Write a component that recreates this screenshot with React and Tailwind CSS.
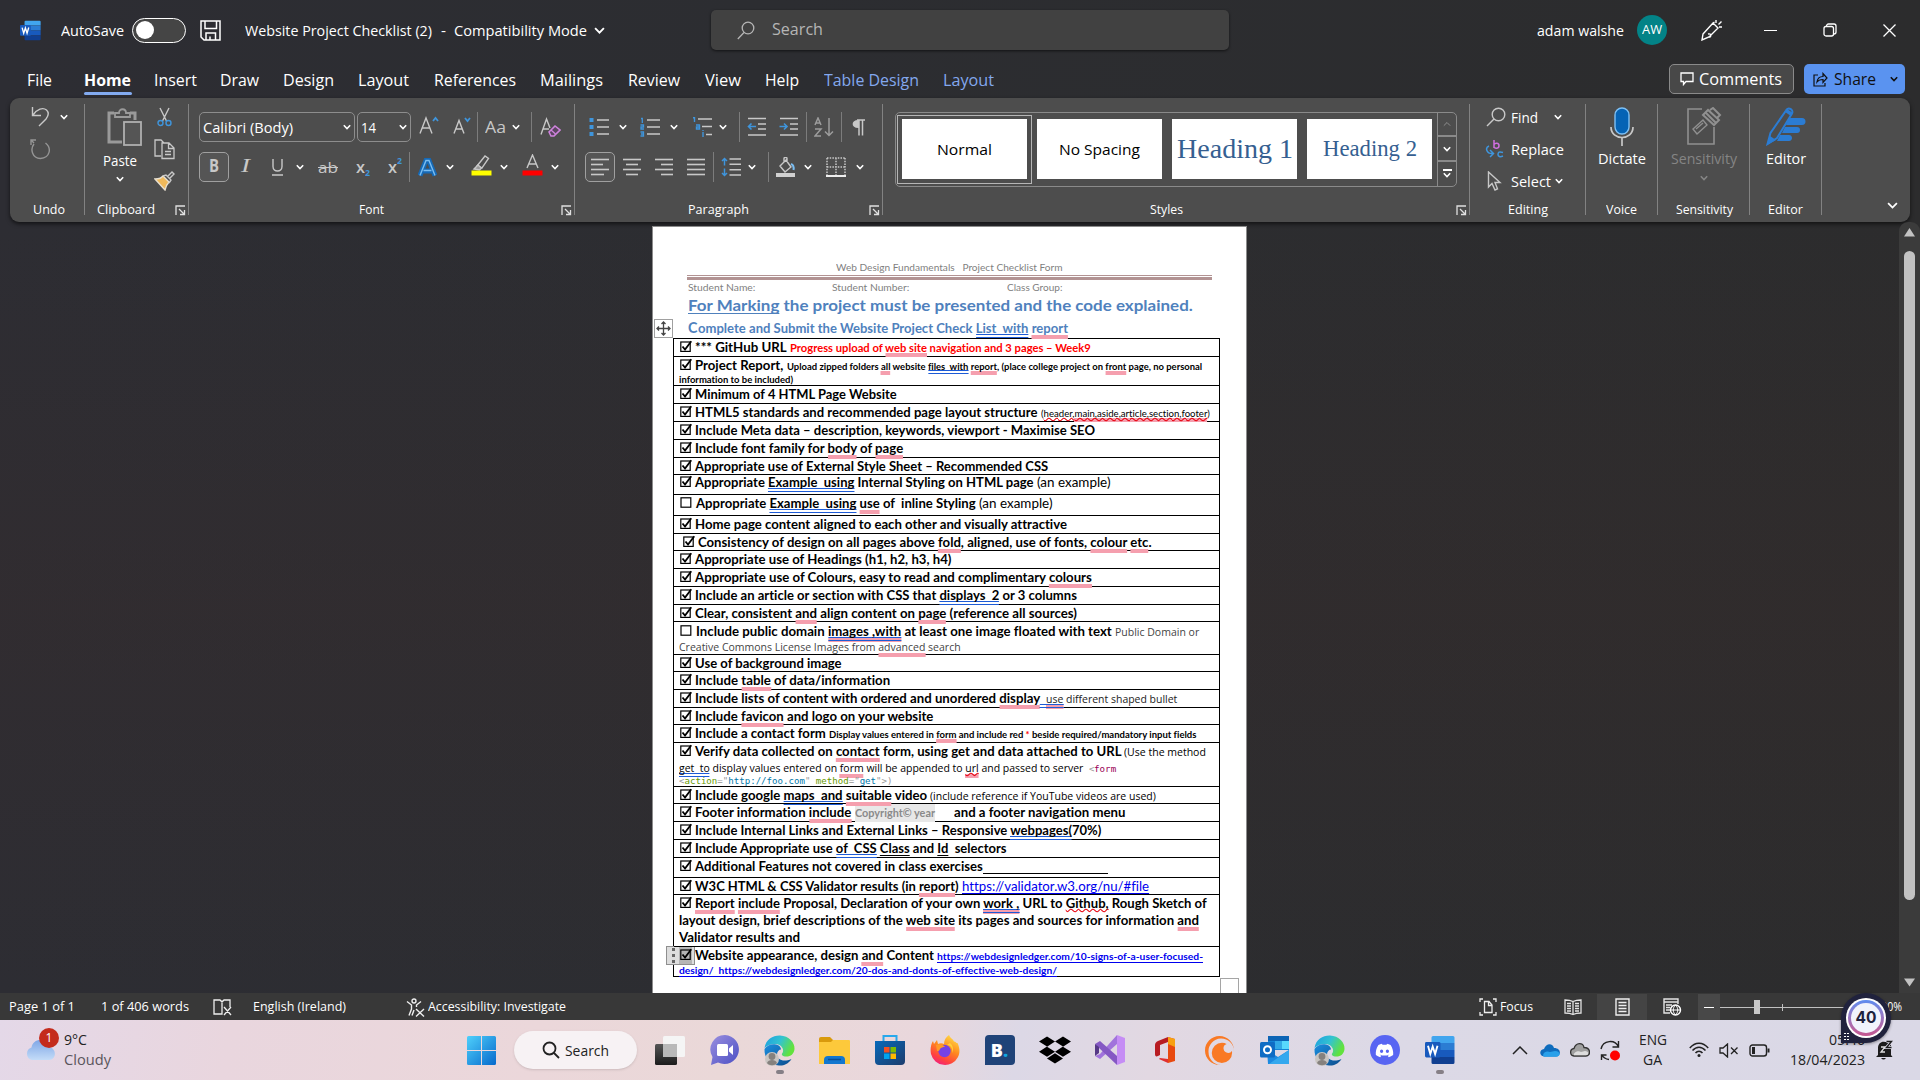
import React, { useLayoutEffect, useRef, useState } from "react";
import { FaDiscord, FaDropbox, FaFirefoxBrowser } from "react-icons/fa";
import { SiCrunchyroll } from "react-icons/si";

/* Text run set to an exact advance width: condenses or expands the glyphs. */
function Fit({ w, className = "", children }) {
  const ref = useRef(null);
  const [k, setK] = useState(1);
  useLayoutEffect(() => {
    const el = ref.current;
    const prev = el.style.transform;
    el.style.transform = "none";
    const natural = el.getBoundingClientRect().width;
    el.style.transform = prev;
    if (natural > 0) setK(w / natural);
  }, [w]);
  return (
    <span className={"inline-block shrink-0 whitespace-pre " + className} style={{ width: w }}>
      <span ref={ref} className="inline-block origin-left" style={{ transform: `scaleX(${k})` }}>
        {children}
      </span>
    </span>
  );
}

function Chev({ className = "", size = 8, sw = 1.6 }) {
  return (
    <svg className={"shrink-0 " + className} width={size} height={size} viewBox="0 0 8 8" fill="none" stroke="currentColor" strokeWidth={sw}>
      <path d="M0.8 2.3 4 5.5 7.2 2.3" />
    </svg>
  );
}

function Svg({ w, h, className = "", children, vb }) {
  return (
    <svg className={"shrink-0 " + className} width={w} height={h} viewBox={vb || `0 0 ${w} ${h}`} fill="none" stroke="#c8c8c8" strokeWidth="1.4">
      {children}
    </svg>
  );
}

function WordIcon({ size }) {
  return (
    <svg className="shrink-0" width={size} height={size} viewBox="0 0 30 30">
      <path d="M8 1h20a1.5 1.5 0 0 1 1.5 1.5V8H6.500V2.500A1.500 1.500 0 0 1 8 1z" fill="#41a5ee" />
      <path d="M6.500 8h23v7h-23z" fill="#2b7cd3" />
      <path d="M6.500 15h23v7h-23z" fill="#185abd" />
      <path d="M6.500 22h23v5.500A1.500 1.500 0 0 1 28 29H8a1.500 1.500 0 0 1-1.500-1.500z" fill="#103f91" />
      <rect x="0" y="7" width="15.500" height="15.500" rx="1.400" fill="#185abd" />
      <path d="M3 10.800 5.300 19 7.700 11.500 10.100 19 12.500 10.800" fill="none" stroke="#fff" strokeWidth="1.900" />
    </svg>
  );
}

/* ---------- Title bar ---------- */
function TitleBar() {
  return (
    <div className="flex h-[60px] items-center text-[14px] leading-5 text-white">
      <div className="ml-5 flex"><WordIcon size={21} /></div>
      <Fit w={63} className="ml-5 translate-y-px">AutoSave</Fit>
      <div className="ml-2 flex h-[25px] w-[54px] items-center rounded-full border-[1.500px] border-white bg-[#454545] pl-[3px]">
        <div className="size-[18px] rounded-full bg-white" />
      </div>
      <Svg w={21} h={21} className="ml-[14px]">
        <g stroke="#fff" strokeWidth="1.500">
          <path d="M1 1h19v19H4l-3-3z" /><path d="M5 1v7.500h11.500V1M6 20v-7h9.500v7M10 20v-3.500" />
        </g>
      </Svg>
      <Fit w={187} className="ml-6 translate-y-px">Website Project Checklist (2)</Fit>
      <Fit w={5} className="ml-[9px] translate-y-px">-</Fit>
      <Fit w={133} className="ml-2 translate-y-px">Compatibility Mode</Fit>
      <Chev className="ml-[7px]" size={11} sw={1.400} />
      <div className="ml-[106px] flex h-10 w-[518px] items-center rounded-[5px] bg-[#414141] text-[15.500px] text-[#b5b5b5] shadow-[0_1px_3px_rgba(0,0,0,.6)]">
        <Svg w={18} h={19} className="ml-[26px]"><circle cx="11" cy="7" r="5.800" stroke="#b5b5b5" strokeWidth="1.300" /><path d="M7 11.500.8 18" stroke="#b5b5b5" strokeWidth="1.300" /></Svg>
        <Fit w={51} className="ml-[17px] -mt-0.5">Search</Fit>
      </div>
      <Fit w={87} className="ml-[308px] translate-y-px">adam walshe</Fit>
      <div className="ml-[13px] flex size-[30px] items-center justify-center rounded-full bg-[#038387] text-[12px]"><Fit w={20}>AW</Fit></div>
      <Svg w={22} h={22} className="ml-[34px]">
        <g stroke="#fff" strokeWidth="1.400"><path d="M2 15 12 4l5 5-9 9-7 3zM12 4l1.500-1M8 18c2 0 3-4-1-3M15 4V1M17.500 5.500l3-3M18 8h3" /></g>
      </Svg>
      <div className="ml-[41px] h-px w-[13px] bg-white" />
      <Svg w={14} h={14} className="ml-[46px]"><g stroke="#fff" strokeWidth="1.300"><rect x="1" y="3.500" width="9.500" height="9.500" rx="2" /><path d="M3.500 3.500V3a2 2 0 0 1 2-2H11a2 2 0 0 1 2 2v6a2 2 0 0 1-2 2h-.5" /></g></Svg>
      <Svg w={13} h={13} className="ml-[46px]"><path d="M.5.5l12 12M12.500.5l-12 12" stroke="#fff" strokeWidth="1.300" /></Svg>
    </div>
  );
}

/* ---------- Ribbon tabs ---------- */
function Tabs() {
  return (
    <div className="flex h-[38px] items-start text-[16px] leading-5 text-white">
      <div className="flex w-full items-center pt-[10px]">
        <Fit w={25} className="ml-[27px]">File</Fit>
        <div className="relative ml-8"><Fit w={47} className="font-bold">Home</Fit><div className="absolute left-0 top-[22px] h-[3px] w-[48px] rounded-sm bg-[#82aaf0]" /></div>
        <Fit w={43} className="ml-[23px]">Insert</Fit>
        <Fit w={39} className="ml-[23px]">Draw</Fit>
        <Fit w={51} className="ml-6">Design</Fit>
        <Fit w={51} className="ml-6">Layout</Fit>
        <Fit w={82} className="ml-[25px]">References</Fit>
        <Fit w={63} className="ml-6">Mailings</Fit>
        <Fit w={52} className="ml-[25px]">Review</Fit>
        <Fit w={36} className="ml-[25px]">View</Fit>
        <Fit w={34} className="ml-6">Help</Fit>
        <Fit w={95} className="ml-[25px] text-[#83a8ee]">Table Design</Fit>
        <Fit w={51} className="ml-6 text-[#83a8ee]">Layout</Fit>
        <div className="-mb-2 -mt-[10px] ml-[675px] flex h-[30px] w-[125px] items-center rounded-[5px] border border-[#8a8a8a] bg-[#484848]">
          <Svg w={14} h={14} className="ml-[10px]"><path d="M1 1h12v8.500H6L3.500 12.500V9.500H1z" stroke="#fff" strokeWidth="1.300" /></Svg>
          <Fit w={83} className="ml-[5px]">Comments</Fit>
        </div>
        <div className="-mb-2 -mt-[10px] ml-[10px] flex h-[30px] w-[101px] items-center rounded-[5px] bg-[#5a93f0] text-[#101010]">
          <Svg w={15} h={15} className="ml-[9px]"><path d="M5 3H1v11h11v-3M4 10c.5-4 3-5.500 6-5.500V1.500l4 4.500-4 4.500V7.500C7 7.500 5.500 8 4 10z" stroke="#101010" strokeWidth="1.200" /></Svg>
          <Fit w={42} className="ml-[6px]">Share</Fit>
          <Chev className="ml-[14px]" />
        </div>
      </div>
    </div>
  );
}

/* ---------- Ribbon ---------- */
function Launcher({ className = "" }) {
  return <Svg w={11} h={11} className={className}><path d="M1 10V1h9M4 4l5.500 5.500M9.500 5v4.500H5" stroke="#e0e0e0" strokeWidth="1.300" /></Svg>;
}
function Sep({ className = "" }) {
  return <div className={"h-[30px] w-px shrink-0 bg-[#7c7c7c] " + className} />;
}
function Group({ className = "", label, lw, lml, launcher, children }) {
  return (
    <div className={"relative flex shrink-0 flex-col " + className}>
      <div className="h-[105px]">{children}</div>
      <div className="flex h-[14px] items-center text-[12px] leading-[14px] text-white">
        <Fit w={lw} className={lml}>{label}</Fit>
        {launcher && <Launcher className="ml-auto mr-[3px]" />}
      </div>
      <div className="absolute right-0 top-[6px] h-[111px] w-px bg-[#828282]" />
    </div>
  );
}
function Lines({ rows, w = 18, h = 18, className = "" }) {
  return (
    <Svg w={w} h={h} className={className}>
      {rows.map(([a, b], i) => <path key={i} d={`M${a} ${1.5 + i * 5}H${b}`} strokeWidth="1.600" />)}
    </Svg>
  );
}
function UndoGroup() {
  return (
    <Group className="w-[75px]" label="Undo" lw={32} lml="ml-[23px]">
      <div className="flex h-[38px] items-center">
        <Svg w={19} h={21} className="ml-[21px] -mt-0.5"><path d="M1.500 1v8.500H10M2 9C6 3 12 1 15.500 4c3 3 1.500 6.500-.5 9l-7 7" /></Svg>
        <Chev className="ml-[10px] text-white" />
      </div>
      <div className="flex h-[26px] items-center">
        <Svg w={21} h={21} className="ml-5"><path d="M6 1H1v5M1.500 1.500 4 4M4 5C0 10 2 19 10.500 19.500 20 19 22 9 15.500 4" stroke="#959595" /></Svg>
      </div>
    </Group>
  );
}
function ClipboardGroup() {
  return (
    <Group className="w-[104px]" label="Clipboard" lw={58} lml="ml-[12px]" launcher>
      <div className="flex">
        <div className="flex w-[69px] flex-col items-center pt-[10px] text-[14px] leading-[18px] text-white">
          <Svg w={36} h={39} className="ml-[10px]">
            <path d="M7 5H2v29h13M23 5h5v7" stroke="#9a9a9a" strokeWidth="3" />
            <path d="M8 9V5h4c0-5 7-5 7 0h4v4z" stroke="#9a9a9a" strokeWidth="1.800" />
            <rect x="17" y="14" width="17" height="23" stroke="#b0b0b0" strokeWidth="1.800" fill="#555" />
          </Svg>
          <Fit w={34} className="ml-px mt-[5px]">Paste</Fit>
          <Chev className="mt-[5px]" />
        </div>
        <div className="flex flex-col items-center pt-[9px]">
          <Svg w={15} h={20}><path d="M3 1l6.500 13M12 1 5.500 14" /><circle cx="3.500" cy="16" r="2.500" stroke="#3f95dc" /><circle cx="11.500" cy="16" r="2.500" stroke="#3f95dc" /></Svg>
          <Svg w={21} h={21} className="mt-3"><path d="M7 17H1V1h6l3 3M8 4h7l5 5v10.500H8zM14.500 4v5.500H20M11 12.500h6M11 15.500h6" strokeWidth="1.300" /></Svg>
          <Svg w={21} h={20} className="mt-[11px]"><path d="M1 8c5 0 6-1 8-3l6 6c-2 2-3 4-4 8z" fill="#f0b95a" stroke="#e8e0d0" /><path d="m9 5 3-1 5 5-2 3M13.500 5.500 18 1l2 2-4.500 4.500" /></Svg>
        </div>
      </div>
    </Group>
  );
}
function Big({ ch, w, className = "" }) {
  return <Fit w={w} className={"leading-[22px] " + className}>{ch}</Fit>;
}
function FontGroup() {
  return (
    <Group className="w-[386px]" label="Font" lw={25} lml="ml-[170px]" launcher>
      <div className="flex h-[30px] translate-y-[14px] items-center text-white">
        <div className="ml-[10px] flex h-[30px] w-[156px] items-center rounded-[5px] border border-[#8d8d8d] text-[14.500px]">
          <Fit w={90} className="ml-[3px] translate-y-px">Calibri (Body)</Fit><Chev className="ml-auto mr-[3px]" />
        </div>
        <div className="ml-[2px] flex h-[30px] w-[54px] items-center rounded-[5px] border border-[#8d8d8d] text-[14.500px]">
          <Fit w={15} className="ml-[3px] translate-y-px">14</Fit><Chev className="ml-auto mr-[3px]" />
        </div>
        <Svg w={20} h={19} className="ml-[8px] -mt-1"><path d="m1 17.500 6-15.500 6 15.500M3.200 12h7.600" /><path d="m14 5 2.500-3L19 5" stroke="#3f95dc" strokeWidth="1.800" /></Svg>
        <Svg w={18} h={19} className="ml-[14px] -mt-1"><path d="m1 17.500 5-13 5 13M2.800 13h6.400" /><path d="m12 2 2.500 3L17 2" stroke="#3f95dc" strokeWidth="1.800" /></Svg>
        <Sep className="ml-[6px]" />
        <Big ch="Aa" w={21} className="ml-[7px] text-[17px] text-[#c8c8c8]" />
        <Chev className="ml-[6px]" />
        <Sep className="ml-[11px]" />
        <Svg w={21} h={21} className="ml-[8px]"><path d="M1 17.500 6.500 2l3.500 9M3 12h6" /><path d="m9 15 6-6 5 4-6 6h-3z" fill="#5b4560" stroke="#cf83dd" strokeWidth="1.600" /><path d="m11 13 4.500 4" stroke="#cf83dd" /></Svg>
      </div>
      <div className="flex h-[30px] translate-y-[24px] items-center text-white">
        <div className="ml-[10px] flex h-[30px] w-[30px] items-center justify-center rounded-[5px] border border-[#a0a0a0] bg-[#555]"><Big ch="B" w={10} className="-translate-y-px text-[17px] font-bold text-[#c8c8c8]" /></div>
        <Big ch="I" w={9} className="ml-[12px] -translate-y-px font-['Liberation_Serif',serif] text-[19px] italic text-[#c8c8c8]" />
        <Svg w={13} h={18} className="ml-[21px]"><path d="M2 1v7.500c0 6 9 6 9 0V1M1 17h11" /></Svg>
        <Chev className="ml-[12px]" />
        <Big ch={<span className="line-through">ab</span>} w={20} className="ml-[14px] text-[15px] text-[#c8c8c8]" />
        <div className="ml-[18px] flex w-[14px] text-[#c8c8c8]"><Big ch="x" w={9} className="text-[16px] font-semibold" /><Big ch="2" w={5} className="translate-y-1.5 text-[9px] font-bold text-[#3f95dc]" /></div>
        <div className="ml-[18px] flex w-[14px] text-[#c8c8c8]"><Big ch="x" w={9} className="text-[16px] font-semibold" /><Big ch="2" w={5} className="-translate-y-1.5 text-[9px] font-bold text-[#3f95dc]" /></div>
        <Sep className="ml-[7px]" />
        <Svg w={19} h={19} className="ml-[8px]"><path d="m2 17.500 6-15h3l6 15M5 13h9" stroke="#1669b5" strokeWidth="5" /><path d="m2 17.500 6-15h3l6 15M5.500 12.500h8" stroke="#79bdf2" strokeWidth="1.400" /></Svg>
        <Chev className="ml-[9px]" />
        <Svg w={21} h={22} className="ml-[17px] -mt-1"><path d="m6 12 8-10 3.500 2.500L11 14z" /><path d="M3 15l4-4 3.500 3-2 2z" fill="#999" /><path d="M.5 16.500h20v5H.5z" fill="#ff0" stroke="none" /></Svg>
        <Chev className="ml-[8px]" />
        <Svg w={21} h={22} className="ml-[14px] -mt-1"><path d="m5 14 5.500-13L16 14M7 10h7" /><path d="M.5 16.500h20v5H.5z" fill="#f00" stroke="none" /></Svg>
        <Chev className="ml-[8px]" />
      </div>
    </Group>
  );
}
function ListIcon({ kind, className = "" }) {
  const blue = "#3f95dc";
  return (
    <Svg w={20} h={20} className={className}>
      {kind === "bullets" && <><path d="M8 3h12M8 10h12M8 17h12" strokeWidth="1.600" /><path d="M.5 1h4v4h-4zM.5 8h4v4h-4zM.5 15h4v4h-4z" fill={blue} stroke="none" /></>}
      {kind === "numbers" && <><path d="M7 3h13M7 10h13M7 17h13" strokeWidth="1.600" /><path d="M1 1.500h1.300V6M.5 8h3v2H1v2h3M.5 15h3v4h-3M1 17h2.500" stroke={blue} strokeWidth="1.300" /></>}
      {kind === "multi" && <><path d="M6 2h14M10 9.500h10M14 17.500h6" strokeWidth="1.600" /><path d="M1 .8h1.500V5M4 8h3.500v4H4.500v-2H7M11 13v1M11 15v5" stroke={blue} strokeWidth="1.400" /></>}
      {kind === "outdent" && <><path d="M1 1.500h18M11 7h8M11 12h8M1 18h18" strokeWidth="1.600" /><path d="M9 9.500H1.500M4.500 6.500l-3 3 3 3" stroke={blue} strokeWidth="1.600" /></>}
      {kind === "indent" && <><path d="M1 1.500h18M11 7h8M11 12h8M1 18h18" strokeWidth="1.600" /><path d="M.5 9.500H8M5 6.500l3 3-3 3" stroke={blue} strokeWidth="1.600" /></>}
      {kind === "sort" && <g stroke="#9c9c9c"><path d="m1 8 3-7 3 7M2 6h4M1 12h6l-6 7h6M15 1v17M11 14.500l4 4 4-4" strokeWidth="1.500" /></g>}
      {kind === "spacing" && <><path d="M8.500 2H20M8.500 7.300H20M8.500 12.700H20M8.500 18H20" strokeWidth="1.600" /><path d="M3.500 1.500v7M1 4l2.500-2.500L6 4M3.500 11.500v7M1 16l2.500 2.500L6 16" stroke={blue} strokeWidth="1.500" /></>}
      {kind === "shade" && <><path d="m4 9 6-6 5 7-6 5zM8 5V1.500c0-1.500 3-1.500 3 0V5" /><path d="M15 7c3 1 3 3 2.500 6" stroke="#79bdf2" strokeWidth="2" /><path d="M0 16h19v4H0z" fill="#d0d0d0" stroke="none" /></>}
      {kind === "border" && <><path d="M1 1h18M1 1v18M19 1v18M10 1v18M1 10h18" strokeDasharray="1.500 1.200" strokeWidth="1.500" /><path d="M0 19h20" strokeWidth="2" stroke="#eee" /></>}
    </Svg>
  );
}
function ParagraphGroup() {
  return (
    <Group className="w-[308px]" label="Paragraph" lw={61} lml="ml-[113px]" launcher>
      <div className="flex h-[30px] translate-y-[14px] items-center text-white">
        <ListIcon kind="bullets" className="ml-[14px]" /><Chev className="ml-[10px]" />
        <ListIcon kind="numbers" className="ml-[13px]" /><Chev className="ml-[10px]" />
        <ListIcon kind="multi" className="ml-[14px]" /><Chev className="ml-[7px]" />
        <Sep className="ml-[12px]" />
        <ListIcon kind="outdent" className="ml-[7px]" />
        <ListIcon kind="indent" className="ml-[12px]" />
        <Sep className="ml-[7px]" />
        <ListIcon kind="sort" className="ml-[7px]" />
        <Sep className="ml-[7px]" />
        <Svg w={13} h={17} className="ml-[10px]"><path d="M5 1h8M7 1v15.500M10.500 1v15.500" strokeWidth="1.500" /><path d="M7 1C-1.500.5-1.500 9.500 7 9z" fill="#c8c8c8" stroke="none" /></Svg>
      </div>
      <div className="flex h-[30px] translate-y-[24px] items-center text-white">
        <div className="ml-[10px] flex h-[30px] w-[30px] items-center justify-center rounded-[5px] border border-[#a0a0a0] bg-[#555]"><Lines rows={[[0, 18], [0, 12], [0, 18], [0, 13]]} /></div>
        <Lines className="ml-[8px]" rows={[[0, 18], [3, 15], [0, 18], [3, 15]]} />
        <Lines className="ml-[14px]" rows={[[0, 18], [6, 18], [0, 18], [6, 18]]} />
        <Lines className="ml-[14px]" rows={[[0, 18], [0, 18], [0, 18], [0, 18]]} />
        <Sep className="ml-[8px]" />
        <ListIcon kind="spacing" className="ml-[7px]" /><Chev className="ml-[7px]" />
        <Sep className="ml-[12px]" />
        <ListIcon kind="shade" className="ml-[7px]" /><Chev className="ml-[8px]" />
        <ListIcon kind="border" className="ml-[14px]" /><Chev className="ml-[10px]" />
      </div>
    </Group>
  );
}
function StylesGroup() {
  const card = "flex h-[60px] w-[125px] shrink-0 items-center justify-center bg-white ";
  return (
    <Group className="w-[587px]" label="Styles" lw={33} lml="ml-[267px]" launcher>
      <div className="ml-[12px] flex h-[75px] w-[562px] translate-y-[14px] rounded-[5px] border border-[#8a8a8a] text-black">
        <div className="flex flex-1 items-center gap-[10px] pl-[5px] leading-[22px]">
          <div className="-mr-[4px] -ml-[4px] flex h-[69px] w-[135px] shrink-0 items-center justify-center border border-[#b5b5b5]">
            <div className={card + "-mt-px"}><Fit w={55} className="text-[15px]">Normal</Fit></div>
          </div>
          <div className={card + "-ml-px -mt-px"}><Fit w={81} className="text-[15px]">No Spacing</Fit></div>
          <div className={card + "-mt-px"}><Fit w={116} className="font-['Liberation_Serif',serif] text-[28px] text-[#365f91]">Heading 1</Fit></div>
          <div className={card + "-mt-px"}><Fit w={94} className="font-['Liberation_Serif',serif] text-[23px] text-[#365f91]">Heading 2</Fit></div>
        </div>
        <div className="flex w-[19px] flex-col border-l border-[#8a8a8a] text-white">
          <div className="flex h-[24px] items-center justify-center border-b-2 border-[#8a8a8a]"><Chev className="rotate-180 text-[#8e8e8e]" sw={1} /></div>
          <div className="flex h-[25px] items-center justify-center border-b-2 border-[#8a8a8a]"><Chev /></div>
          <div className="flex h-[24px] flex-col items-center justify-center"><div className="h-[1.500px] w-[9px] bg-white" /><Chev /></div>
        </div>
      </div>
    </Group>
  );
}
function EditingGroup() {
  return (
    <Group className="w-[116px]" label="Editing" lw={40} lml="ml-[38px]">
      <div className="flex h-full flex-col pt-[9px] text-[14px] leading-5 text-white">
        <div className="flex h-5 items-center">
          <Svg w={20} h={20} className="ml-[16px]"><circle cx="12.500" cy="7.500" r="6.300" /><path d="M8 12 1 19" /></Svg>
          <Fit w={27} className="ml-[5px] translate-y-px">Find</Fit><Chev className="ml-4" />
        </div>
        <div className="mt-[12px] flex h-5 items-center">
          <Svg w={19} h={20} className="ml-[15px]"><path d="M9 1v8M9 5.500c1-1.500 5-2 5 1.200 0 3-4 3-5 1.500" stroke="#cf6fe0" strokeWidth="1.500" /><path d="M18 13.500c-4-1.500-5 0-5 2s2 3 5 1.500M4 7c-4 1.500-3 8 4 7.500M5 11l3.500 3.500L5 18" stroke="#3f95dc" strokeWidth="1.500" /></Svg>
          <Fit w={53} className="ml-[7px] translate-y-px">Replace</Fit>
        </div>
        <div className="mt-[12px] flex h-5 items-center">
          <Svg w={15} h={20} className="ml-[17px]"><path d="M1.500 1v15l3.500-3.500 3 6.500 2.500-1.200L8 11.500h5z" /></Svg>
          <Fit w={40} className="ml-[9px] translate-y-px">Select</Fit><Chev className="ml-1" />
        </div>
      </div>
    </Group>
  );
}
function ToolGroup({ className, label, lw, lml, name, nw, dim, icon }) {
  return (
    <Group className={className} label={label} lw={lw} lml={lml}>
      <div className={"flex flex-col items-center pt-[9px] text-[14px] leading-[20px] " + (dim ? "text-[#858585]" : "text-white")}>
        {icon}
        <Fit w={nw} className="mt-[3px]">{name}</Fit>
        {dim && <Chev className="mt-[5px]" />}
      </div>
    </Group>
  );
}
function Ribbon() {
  return (
    <div className="mx-[10px] flex h-[124px] rounded-[9px] bg-[#4d4d4d] shadow-[0_2px_4px_rgba(0,0,0,.6)]">
      <UndoGroup /><ClipboardGroup /><FontGroup /><ParagraphGroup /><StylesGroup /><EditingGroup />
      <ToolGroup className="w-[72px]" label="Voice" lw={31} lml="ml-[20px]" name="Dictate" nw={48}
        icon={<Svg w={24} h={39}><path d="M1 20c0 14 22 14 22 0M12 31v8" strokeWidth="1.700" /><rect x="5" y="1" width="14" height="26" rx="7" fill="#0563b5" stroke="#7ec0f5" /></Svg>} />
      <ToolGroup className="w-[92px]" label="Sensitivity" lw={57} lml="ml-[18px]" name="Sensitivity" nw={66} dim
        icon={<Svg w={36} h={39}><g stroke="#909090"><path d="M16 2H2v35h26V20" strokeWidth="1.600" /><path d="m7 22 10-9 4 5-10 9zM10 22l7-6" /><path d="m17 8 5-5 11 10-5 5zM24 3l3-2 7 7-3 3M20 6l10 10" strokeWidth="2" /></g></Svg>} />
      <ToolGroup className="w-[72px]" label="Editor" lw={35} lml="ml-[18px]" name="Editor" nw={40}
        icon={<Svg w={40} h={39}><path d="M23 11h13a3 3 0 0 1 0 7H20zM19 20h12a3 3 0 0 1 0 6H16zM14 28h9c4 0 4 6 0 6H11z" fill="#2b7cd3" stroke="none" /><path d="m1.500 37 3-11L20 3.500c2-4 8-1 6 3L11 31z" fill="#4d4d4d" stroke="#2b7cd3" strokeWidth="2" /><path d="m1 38 3-9 6 4zM21 2l6 4-2 3-6-4z" fill="#2b7cd3" stroke="none" /></Svg>} />
      <div className="flex flex-1 items-end justify-end pb-[11px] pr-[12px] text-white"><Chev size={11} sw={1.300} /></div>
    </div>
  );
}

/* ---------- Document ---------- */
const R = ({ w, c = "", children }) => <Fit w={w} className={c}>{children}</Fit>;
const G = ({ children }) => <span className="bg-[linear-gradient(#1d5bd6,#1d5bd6),linear-gradient(#1d5bd6,#1d5bd6)] bg-[length:100%_1px] bg-no-repeat pb-[2px] [background-position:0_100%,0_calc(100%_-_3px)]">{children}</span>;
const Q = ({ children }) => <span className="underline decoration-red-600 decoration-wavy decoration-[0.800px] underline-offset-0 [text-decoration-skip-ink:none]">{children}</span>;
const U = ({ children }) => <span className="underline decoration-1 underline-offset-2 [text-decoration-skip-ink:none]">{children}</span>;
const Pink = ({ children }) => <span className="bg-[linear-gradient(#f59fae,#f59fae)] bg-[length:100%_4px] bg-bottom bg-no-repeat pb-[3px]">{children}</span>;

function Box({ on = true }) {
  return (
    <svg className={"ml-px shrink-0 overflow-visible " + (on ? "mr-[3px]" : "mr-[4px]")} width="12" height="11" viewBox="0 0 12 11" fill="none" stroke="#000" strokeWidth="1.200">
      {on ? <><rect x=".8" y="1" width="9.400" height="9.400" /><path d="m2.500 5.500 2.500 3L11.300.2" strokeWidth="1.800" /></> : <rect x="1" y=".8" width="9.800" height="9.400" />}
    </svg>
  );
}
function L({ h = "h-[16px] leading-[18px]", children }) {
  return <div className={"flex items-baseline " + h}>{children}</div>;
}
function Row({ h = "h-[18px]", l, on = true, pad = "", children, more }) {
  return (
    <div className={"border-t border-black pl-[5px] " + h}>
      <L h={l}><span className={"flex items-baseline " + pad}><Box on={on} /></span>{children}</L>
      {more}
    </div>
  );
}
const LINK = "text-[#0000ee]";
const REG = "font-normal";
const SANS = "font-['Open_Sans','Noto_Sans',sans-serif] font-normal ";

function Checklist() {
  return (
    <div className="ml-[20px] mt-px w-[547px] border-x border-b border-black text-[12.500px] font-bold text-black">
      <Row><R w={94.5}>*** GitHub URL </R><R w={300.8} c="text-[10.800px] text-[#f00]">Progress upload of <Pink>web site</Pink> navigation and 3 pages – Week9</R></Row>
      <Row h="h-[29px]" more={<L h="h-[13px] leading-[13px]"><R w={114} c="text-[8.700px]">information to be included)</R></L>}>
        <R w={91.5}>Project Report, </R>
        <R w={415.2} c="text-[8.700px]">Upload zipped folders <Pink>all</Pink> website <G>files  with</G> <Pink>report</Pink>, (place college project on <Pink>front</Pink> page, no personal</R>
      </Row>
      <Row><R w={201.7}>Minimum of 4 HTML Page Website</R></Row>
      <Row><R w={345.6}>HTML5 standards and recommended page layout structure </R><R w={168.8} c="text-[9px] font-normal">(<Q>header,<Pink>main,aside,article,section,footer</Pink></Q>)</R></Row>
      <Row><R w={400}>Include Meta data – description, keywords, viewport - Maximise SEO</R></Row>
      <Row><R w={208.2}>Include font family for <Pink>body</Pink> of <Pink>page</Pink></R></Row>
      <Row h="h-[17px]"><R w={353.2}>Appropriate use of External Style Sheet – Recommended CSS</R></Row>
      <Row h="h-[20px]" l="h-[14px] leading-[16px]"><R w={341.7}>Appropriate <G>Example  using</G> Internal Styling on HTML page </R><R w={73.5} c={REG}>(an example)</R></Row>
      <Row h="h-[21px]" on={false}><R w={282.8}>Appropriate <G>Example  using</G> <Pink>use</Pink> of  inline Styling </R><R w={73.5} c={REG}>(an example)</R></Row>
      <Row><R w={372}>Home page content aligned to each other and visually attractive</R></Row>
      <Row h="h-[17px]" pad="pl-[3px]"><R w={453.5}>Consistency of design on all pages above <Pink>fold</Pink>, aligned, use of fonts, <Pink>colour</Pink> <Pink>etc</Pink>.</R></Row>
      <Row><R w={256.4}>Appropriate use of Headings (h1, h2, h3, h4)</R></Row>
      <Row><R w={396.8}>Appropriate use of Colours, easy to read and complimentary <Pink>colours</Pink></R></Row>
      <Row><R w={381.9}>Include an article or section with CSS that <G>displays  2</G> or 3 columns</R></Row>
      <Row h="h-[17px]"><R w={381.9}>Clear, consistent <Pink>and</Pink> align content on <Pink>page</Pink> (reference all sources)</R></Row>
      <Row h="h-[33px]" l="h-[18px] leading-[20px]" on={false} more={<L h="h-[14px] leading-[14px]"><R w={281.6} c={SANS + "text-[10px] text-[#444]"}>Creative Commons License Images from <Pink>advanced</Pink> search</R></L>}>
        <R w={419}>Include public domain <Pink><G>images ,with</G></Pink> at least one image floated with text </R>
        <R w={84.2} c={SANS + "text-[10px] text-[#444]"}>Public Domain or</R>
      </Row>
      <Row h="h-[17px]"><R w={146.6}>Use of background image</R></Row>
      <Row><R w={195.2}>Include <Pink>table</Pink> of data/information</R></Row>
      <Row><R w={351.3}>Include lists of content with ordered and unordered <Pink>display</Pink><G>  </G></R><R w={131.3} c={SANS + "text-[10px] text-[#222]"}><Pink><G>use</G></Pink> different shaped bullet</R></Row>
      <Row h="h-[17px]"><R w={238.4}>Include <Pink>favicon</Pink> and logo on your website</R></Row>
      <Row><R w={134}>Include a contact form </R><R w={367.4} c="text-[8.700px]">Display values entered in <Pink>form</Pink> and include red <span className="text-[#f00]">*</span> beside required/mandatory input fields</R></Row>
      <Row h="h-[44px]" more={<>
        <L h="h-[18px] leading-[18px]">
          <R w={409.8} c={SANS + "text-[10px]"}><G>get  to</G> display values entered on <Pink>form</Pink> will be appended to <Pink><Q>url</Q></Pink> and passed to server  </R>
          <R w={5.4} c="font-['DejaVu_Sans_Mono',monospace] text-[9px] font-normal text-[#999]">&lt;</R>
          <R w={22.2} c="font-['DejaVu_Sans_Mono',monospace] text-[9px] font-normal text-[#905]">form</R>
        </L>
        <L h="h-[8px] leading-[8px]">
          <R w={213.5} c="font-['DejaVu_Sans_Mono',monospace] text-[9px] font-normal text-[#999]">&lt;<span className="text-[#690]">action</span>="<span className="text-[#07a]">http://foo.com</span>" <span className="text-[#690]">method</span>="<span className="text-[#07a]">get</span>"&gt;)</R>
        </L></>}>
        <R w={429.4}>Verify data collected on <Pink>contact</Pink> form, using get and data attached to URL </R><R w={81.9} c={SANS + "text-[10px]"}>(Use the method</R>
      </Row>
      <Row h="h-[17px]"><R w={235.3}>Include google <G>maps  and</G> <Pink>suitable</Pink> video </R><R w={225.8} c={SANS + "text-[10px]"}>(include reference if YouTube videos are used)</R></Row>
      <Row><R w={159.6}>Footer information <Pink>include</Pink> </R><R w={80} c="bg-[#e8e8e8] text-[10.500px] font-bold text-[#8a8a8a]">Copyright© year</R><R w={171.4} c="ml-[19.500px]">and a footer navigation menu</R></Row>
      <Row><R w={406.4}>Include Internal Links and External Links – Responsive <G>webpages(</G>70%)</R></Row>
      <Row><R w={311.5}>Include Appropriate use <G>of  CSS</G> <U>Class</U> and <U>Id</U>  selectors</R></Row>
      <Row h="h-[20px]"><R w={287.8}>Additional Features not covered in class exercises</R><span className="h-px w-[125px] translate-y-[3px] bg-black" /></Row>
      <Row h="h-[17px]"><R w={266.7}>W3C HTML &amp; CSS Validator results (in <Pink>report</Pink>) </R><R w={187.1} c={"font-normal " + LINK}><U>https://validator.w3.org/nu/#file</U></R></Row>
      <Row h="h-[52px]" more={<>
        <L h="h-[17px] leading-[19px]"><R w={520}>layout design, brief descriptions of the <Pink>web site</Pink> its pages and sources for information <Pink>and</Pink></R></L>
        <L h="h-[17px] leading-[19px]"><R w={121}>Validator results and</R></L></>}>
        <R w={511.6}><Pink>Report</Pink> <Pink>include</Pink> Proposal, Declaration of your own <Pink><G>work ,</G></Pink> URL to <Q>Github,</Q> Rough Sketch of</R>
      </Row>
      <div className="relative">
        <div className="absolute -left-[8px] top-0 flex h-[19px] w-[29px] items-center border border-[#8f8f8f] bg-[#ddd]">
          <div className="flex w-[12px] flex-col items-center gap-[3px]"><i className="size-[3px] bg-[#666]" /><i className="size-[3px] bg-[#666]" /><i className="size-[3px] bg-[#666]" /></div>
          <div className="h-full w-[13px] bg-[#b5b5b5]" />
        </div>
        <div className="relative">
          <Row h="h-[30px]" more={<L h="h-[13px] leading-[16px]"><R w={378} c={"text-[9.500px] " + LINK}><U>design/  https://webdesignledger.com/20-dos-and-donts-of-effective-web-design/</U></R></L>}>
            <R w={242.2}>Website appearance, design <Pink>and</Pink> Content </R><R w={266} c={"text-[9.500px] " + LINK}><U>https://webdesignledger.com/10-signs-of-a-user-focused-</U></R>
          </Row>
        </div>
      </div>
    </div>
  );
}
function Page() {
  return (
    <div className="relative ml-[652px] mt-1 h-[767px] w-[595px] shrink-0 border-x border-t border-[#8c8c8c] bg-white pt-[34px] font-['Lato','Open_Sans',sans-serif] text-[#4f81bd] [font-variant-ligatures:none]">
      <div className="flex h-[13px] text-[9.500px] leading-[13px] text-[#7f7f7f]"><Fit w={226.5} className="ml-[183px]">Web Design Fundamentals   Project Checklist Form</Fit></div>
      <div className="ml-[34px] mt-px h-[5px] w-[525px] border-b-[3px] border-t border-[#b29393]" />
      <div className="mt-px flex h-[14px] text-[9.500px] leading-[14px] text-[#7f7f7f]">
        <Fit w={67.4} className="ml-[35px]">Student Name:</Fit><Fit w={77.3} className="ml-[77px]">Student Number:</Fit><Fit w={55.5} className="ml-[97px]">Class Group:</Fit>
      </div>
      <div className="flex h-[20px] text-[15px] font-bold leading-[20px]"><Fit w={504.8} className="ml-[35px]"><U>For Marking</U> the project must be presented and the code explained.</Fit></div>
      <div className="mt-1 flex h-[18px] items-baseline text-[12.500px] font-bold leading-[17px]">
        <Fit w={9.5} className="ml-[35px] text-[15px]">C</Fit><Fit w={370}>omplete and Submit the Website Project Check <G>List  with</G> <Pink>report</Pink></Fit>
      </div>
      <Checklist />
      <div className="absolute left-px top-[92px] flex size-[19px] items-center justify-center border border-[#a0a0a0] bg-white">
        <svg width="15" height="15" viewBox="0 0 15 15" fill="none" stroke="#444" strokeWidth="1.300"><path d="M7.500 1v13M1 7.500h13M5.500 3l2-2 2 2M5.500 12l2 2 2-2M3 5.500l-2 2 2 2M12 5.500l2 2-2 2" /></svg>
      </div>
      <div className="absolute bottom-0 right-[7px] h-[15px] w-[19px] border border-b-0 border-[#a5a5a5] bg-white" />
    </div>
  );
}
function Workspace() {
  return (
    <div className="flex h-[771px] overflow-hidden bg-[linear-gradient(180deg,transparent,rgba(60,42,40,.25)_50%,transparent)]">
      <Page />
      <div className="ml-auto flex h-full w-[21px] flex-col items-center rounded-t-[9px] bg-[#3b3b3b] pb-[6px] pt-[6px]">
        <svg width="11" height="9" viewBox="0 0 11 9"><path d="M5.500 0 11 8.500H0z" fill="#c2c2c2" /></svg>
        <div className="mt-[14px] h-[649px] w-[11px] rounded-full bg-[#c2c2c2]" />
        <svg className="mt-auto" width="11" height="9" viewBox="0 0 11 9"><path d="M5.500 8.500 0 .5h11z" fill="#c2c2c2" /></svg>
      </div>
    </div>
  );
}

/* ---------- Status bar ---------- */
function StatusBar() {
  return (
    <div className="relative flex h-[27px] items-center bg-[#383838] pt-px text-[12px] leading-[18px] text-white">
      <Fit w={66} className="ml-[9px]">Page 1 of 1</Fit>
      <Fit w={88} className="ml-[26px]">1 of 406 words</Fit>
      <Svg w={19} h={18} className="ml-[24px]"><path d="M9 2.500V16H1V2h6l2 2 2-2h6v7M11 9l7 8M18 9l-7 8" stroke="#eee" strokeWidth="1.300" /></Svg>
      <Fit w={93} className="ml-[21px]">English (Ireland)</Fit>
      <Svg w={19} h={19} className="ml-[60px]"><circle cx="8" cy="3" r="2" stroke="#eee" /><path d="M1 3.500 5.500 7v4L3 17.500M15 3.500 10.500 7v2M6 17.500 8 12M10 11l8 7.500M18 11l-8 7.500" stroke="#eee" strokeWidth="1.400" /></Svg>
      <Fit w={138} className="ml-[3px]">Accessibility: Investigate</Fit>
      <Svg w={18} h={18} className="ml-[913px]"><path d="M4 1H1v3M14 1h3v3M4 17H1v-3M14 17h3v-3M5.500 3.500H10L13 7v7.500H5.500zM9.500 3.500v4H13" stroke="#eee" strokeWidth="1.300" /></Svg>
      <Fit w={33} className="ml-[3px]">Focus</Fit>
      <Svg w={18} h={17} className="ml-[31px]"><path d="M9 2.500C6 1 4 1 1 1v13c3 0 5 0 8 1.500 3-1.500 5-1.500 8-1.500V1c-3 0-5 0-8 1.500zV15M3 4.500h4M3 7h4M3 9.500h4M3 12h4M11 4.500h4M11 7h4M11 9.500h4M11 12h4" stroke="#e4e4e4" strokeWidth="1.300" /></Svg>
      <div className="ml-[15px] flex h-full w-[50px] items-center justify-center bg-[#444]"><Svg w={15} h={18}><path d="M1 1h13v16H1zM3.500 4.500h8M3.500 7.500h8M3.500 10.500h8M3.500 13.500h8" stroke="#eee" strokeWidth="1.400" /></Svg></div>
      <Svg w={19} h={18} className="ml-[16px]"><path d="M7 15H1V1h14v5M1 4h14M3 7h6M3 9.500h4M3 12h4" stroke="#e4e4e4" strokeWidth="1.400" /><circle cx="12.500" cy="12" r="5" stroke="#fff" /><path d="M7.500 12h10M12.500 7c-3 3-3 7 0 10M12.500 7c3 3 3 7 0 10" stroke="#fff" strokeWidth="1" /></Svg>
      <div className="ml-[16px] flex h-full w-[22px] items-center justify-center bg-[#484848]"><div className="h-px w-[10px] bg-white" /></div>
      <div className="flex w-[145px] items-center">
        <div className="h-px w-[34px] bg-[#c0c0c0]" /><div className="h-[14px] w-[6px] bg-[#c8c8c8]" /><div className="h-px w-[22px] bg-[#c0c0c0]" /><div className="h-[7px] w-px bg-[#c0c0c0]" /><div className="h-px flex-1 bg-[#c0c0c0]" />
      </div>
      <Fit w={27} className="ml-[10px]">100%</Fit>
    </div>
  );
}

/* ---------- Taskbar ---------- */
function Edge() {
  return (
    <svg width="31" height="31" viewBox="0 0 31 31">
      <defs>
        <linearGradient id="eg1" x1="0" y1="0" x2="1" y2=".4"><stop offset="0" stopColor="#1b9de2" /><stop offset=".55" stopColor="#33c3d0" /><stop offset="1" stopColor="#62e23d" /></linearGradient>
        <linearGradient id="eg2" x1="0" y1="0" x2="1" y2="1"><stop offset="0" stopColor="#1b8fe0" /><stop offset="1" stopColor="#0c4c8c" /></linearGradient>
      </defs>
      <path d="M.5 13C2 4 9 .3 16 .5c9 .3 15 7 14.500 13.500-.4 5-4 7.500-8 7.500-4.500 0-5.500-2-4-3.500C20.500 15 18 9 11 9 6 9 2.500 11 .5 13z" fill="url(#eg1)" />
      <path d="M.5 14C3 10 8 8.500 12 9.500c3.500.8 5 3 5 5-2 0-4 2-4 5 0 5 6 8 14.500 4.500C24 29.500 19 31 15 30.500 6 30 0 23 .5 14z" fill="url(#eg2)" />
      <circle cx="8" cy="24" r="7" fill="#c9c5c2" /><circle cx="8" cy="21.500" r="3.400" fill="#85817e" /><path d="M3 28c1-4 9-4 10 0-2 3-8 3-10 0z" fill="#85817e" />
    </svg>
  );
}
const ICONS = [
  <svg width="30" height="29" viewBox="0 0 30 29"><defs><linearGradient id="tv" x1="0" y1="0" x2="0" y2="1"><stop offset="0" stopColor="#555" /><stop offset="1" stopColor="#1c1c1c" /></linearGradient></defs><rect x="0" y="8" width="22" height="21" rx="1.500" fill="url(#tv)" /><rect x="8" y="0" width="22" height="21" rx="1.500" fill="#f5f5f5" /><path d="M8 8h14v13H8z" fill="#b9b9b9" /></svg>,
  <svg width="30" height="30" viewBox="0 0 30 30"><defs><linearGradient id="ch" x1="0" y1="0" x2="1" y2="1"><stop offset="0" stopColor="#9a8fdf" /><stop offset="1" stopColor="#4b4fc4" /></linearGradient></defs><path d="M15 0a14.500 14.500 0 1 1-7 27.500L1 30l1.500-8A14.500 14.500 0 0 1 15 0z" fill="url(#ch)" /><rect x="7" y="9" width="11" height="12" rx="1.500" fill="#fff" /><path d="m19 13.500 4-3.500v10l-4-3.500z" fill="#fff" /></svg>,
  <Edge />,
  <svg width="31" height="27" viewBox="0 0 31 27"><path d="M0 2a2 2 0 0 1 2-2h9l3 3v6H0z" fill="#d99a0c" /><path d="M0 5h12l2-2h16a1 1 0 0 1 1 1v23H0z" fill="#fdc93b" /><path d="M5 27v-4a4 4 0 0 1 4-4h13a4 4 0 0 1 4 4v4z" fill="#1377cf" /><path d="M9 22.500h13" stroke="#0a4f96" strokeWidth="1.500" /></svg>,
  <svg width="30" height="30" viewBox="0 0 30 30"><defs><linearGradient id="st" x1="0" y1="0" x2="1" y2="1"><stop offset="0" stopColor="#0669ba" /><stop offset="1" stopColor="#1d3c6c" /></linearGradient></defs><path d="M8.500 6V1h13v5" fill="none" stroke="#27a8ec" strokeWidth="2" /><path d="M0 6h30v20a4 4 0 0 1-4 4H4a4 4 0 0 1-4-4z" fill="url(#st)" /><path d="M9 12h5.500v5.500H9z" fill="#f25022" /><path d="M15.500 12H21v5.500h-5.500z" fill="#7fba00" /><path d="M9 18.500h5.500V24H9z" fill="#00a4ef" /><path d="M15.500 18.500H21V24h-5.500z" fill="#ffb900" /></svg>,
  <svg width="30" height="30" viewBox="0 0 30 30"><defs><linearGradient id="ff" x1=".8" y1="0" x2=".3" y2="1"><stop offset="0" stopColor="#ffe14a" /><stop offset=".45" stopColor="#ff8a1e" /><stop offset=".8" stopColor="#ff4040" /><stop offset="1" stopColor="#f0207e" /></linearGradient></defs><path d="M19 0c1 3 4 4 5 6.500 1-.2 2 .6 2.500 1.500l1 0C30 13 30 18 28 22a14.500 14.500 0 0 1-27-3C0 14 1 9 3 6l1 3 3-4 1 4c2-1 4-1 6 0 0-4 2-7 5-9z" fill="url(#ff)" /><circle cx="14.500" cy="16" r="6.200" fill="#7542e5" /><path d="M6 10c4-2 8 0 9 2-2 0-4 .5-5 2-1 2-1 2-3 2z" fill="#ff9a28" /><path d="M17 10c4 0 6 4 5 8 2-3 1-8-2-10z" fill="#ffcf3c" /></svg>,
  <div className="flex size-[30px] items-center justify-center rounded-[4px] rounded-bl-none bg-[#1f4378] text-[18px] font-extrabold leading-none text-white"><span>B<span className="text-[#12a5e0]">.</span></span></div>,
  <FaDropbox className="size-[32px] text-black" />,
  <svg width="30" height="30" viewBox="0 0 30 30"><path d="M22 0l8 3v24l-8 3z" fill="#c58df5" /><path d="M22 0v9L5 24l-5-3 5-2z" fill="#a173dc" /><path d="M0 9l5-3 17 15v9L3 12z" fill="#8558c4" /><path d="M0 9v12l4-3V12z" fill="#553886" /></svg>,
  <svg width="20" height="26" viewBox="0 0 20 26"><path d="M13 0l7 2v22l-7 2z" fill="#e8490f" /><path d="M13 0 3 4C1 5 0 6 0 8v9c0 2 1 3 3 2l2-1V8l8-3z" fill="#b81c22" /><path d="M5 21l8 1v4l-9-4z" fill="#e03030" /><path d="M13 0l7 2v8l-7-3z" fill="#f7a011" /></svg>,
  <SiCrunchyroll className="size-[29px] text-[#f97924]" />,
  <svg width="29" height="28" viewBox="0 0 29 28"><path d="M8 0h21v14H8z" fill="#1484d7" /><path d="M8 0h21v5H8z" fill="#0c64b5" /><path d="M15 5h7v8h-7z" fill="#32a9e7" /><path d="M22 5h7v8h-7z" fill="#58d9fd" /><path d="M7 14l11 7 11-7v14H8z" fill="#1d8ae0" /><path d="m29 14-20 14h20z" fill="#34a8ee" /><rect x="0" y="6" width="15" height="15.500" rx="1.500" fill="#0f6cc4" /><circle cx="7.500" cy="13.700" r="3.500" fill="none" stroke="#fff" strokeWidth="2" /></svg>,
  <Edge />,
  <div className="flex size-[30px] items-center justify-center rounded-full bg-[#5865f2]"><FaDiscord className="size-[19px] text-white" /></div>,
  <WordIcon size={30} />,
];
function Taskbar() {
  return (
    <div className="flex h-[60px] items-center bg-[linear-gradient(100deg,#e4d8e8_0%,#e9d6de_12%,#ebd7da_28%,#ead8d8_38%,#e9d7dc_48%,#dcd8e6_53%,#e2d8e2_60%,#dcd9e6_72%,#dad8e6_100%)] text-[14.500px] leading-[20px] text-[#222]">
      <div className="relative ml-[25px] flex h-full w-[31px] items-center">
        <svg width="31" height="22" viewBox="0 0 31 22" className="-mt-px"><defs><linearGradient id="cl" x1="0" y1="0" x2="0" y2="1"><stop offset="0" stopColor="#7ea6e6" /><stop offset="1" stopColor="#c4dcf8" /></linearGradient></defs><path d="M7 21a6.500 6.500 0 0 1-.5-12.500C8-1 21-2 23 8c9 0 9 13 1 13z" fill="url(#cl)" /></svg>
        <div className="absolute left-[14px] top-[8px] flex size-5 items-center justify-center rounded-full bg-[#c42b1c] text-[12px] text-white">1</div>
      </div>
      <div className="ml-[8px] flex w-[395px] flex-col"><Fit w={23}>9°C</Fit><Fit w={47} className="text-[#5a555c]">Cloudy</Fit></div>
      <svg className="ml-[8px] shrink-0" width="29" height="29" viewBox="0 0 29 29"><defs><linearGradient id="wn" x1="0" y1="0" x2="1" y2="1"><stop offset="0" stopColor="#4fd0fb" /><stop offset="1" stopColor="#0669cc" /></linearGradient></defs><path d="M0 1.500Q0 0 1.500 0H14v14H0zM15 0h12.500Q29 0 29 1.500V14H15zM0 15h14v14H1.500Q0 29 0 27.500zM15 15h14v12.500q0 1.500-1.500 1.500H15z" fill="url(#wn)" /></svg>
      <div className="ml-[18px] flex h-[38px] w-[123px] shrink-0 items-center rounded-full bg-[#f7f2f4] shadow-sm">
        <Svg w={18} h={18} className="ml-[28px]"><circle cx="7.500" cy="7.500" r="6" stroke="#222" strokeWidth="1.800" /><path d="m12 12 5 5" stroke="#222" strokeWidth="1.800" /></Svg>
        <Fit w={44} className="ml-[5px] translate-y-px">Search</Fit>
      </div>
      <div className="ml-[5px] flex h-full">
        {ICONS.map((ic, i) => (
          <div key={i} className="relative flex w-[55px] items-center justify-center">
            {ic}
            {(i === 2 || i === 14) && <div className="absolute bottom-[6px] h-[4px] w-[8px] rounded-full bg-[#857f86]" />}
          </div>
        ))}
      </div>
      <Svg w={16} h={9} className="ml-[45px]"><path d="m1 8 7-7 7 7" stroke="#222" strokeWidth="1.500" /></Svg>
      <svg className="ml-[12px] shrink-0" width="20" height="13" viewBox="0 0 20 13"><path d="M4 12.500C-1 12-1 5.500 4 5 6-1.500 13-1 14 4c8 0 7 8.500 2 8.500z" fill="#0f6cbd" /><path d="M4 12.800C1 10 6 6 10 8l5-1c6 0 6 5.800 1 5.800z" fill="#28a0ea" /></svg>
      <svg className="ml-[10px] shrink-0" width="20" height="14" viewBox="0 0 20 14"><path d="M4 13C-.5 12.500-.5 6 4 5.500 6-1 13-.5 14 4.500c7 0 7 8.500 2 8.500z" fill="#a0a0a0" stroke="#333" strokeWidth="1.300" /><path d="M4 12.300C3 10 8 7 11 9l4-1c4 0 4 4.300 1 4.300z" fill="#ddd" /></svg>
      <svg className="ml-[10px] shrink-0" width="20" height="21" viewBox="0 0 20 21" fill="none" stroke="#222" strokeWidth="1.400"><path d="M1 9C3 0 15-1 18.500 7M18.500 1v6h-6M1.500 20v-5h5M2 15c1 2 3 4 7 4.500" /><circle cx="15" cy="15.500" r="5" fill="#f00" stroke="none" /></svg>
      <div className="ml-[18px] flex w-[29px] flex-col items-center"><Fit w={28}>ENG</Fit><Fit w={19}>GA</Fit></div>
      <svg className="ml-[22px] shrink-0" width="20" height="16" viewBox="0 0 20 16" fill="none" stroke="#222" strokeWidth="1.500"><path d="M.8 6C6-.5 14-.5 19.200 6M3.500 8.500c4-4.500 9-4.500 13 0M6.500 11c2-2.500 5-2.500 7 0" /><circle cx="10" cy="13.500" r="1.500" fill="#222" stroke="none" /></svg>
      <svg className="ml-[10px] shrink-0" width="20" height="15" viewBox="0 0 20 15" fill="none" stroke="#222" strokeWidth="1.300"><path d="M1 5h3l4.500-4v13L4 10H1zM12 4.500l6.500 6.500M18.500 4.500 12 11" /></svg>
      <svg className="ml-[10px] shrink-0" width="21" height="13" viewBox="0 0 21 13" fill="none" stroke="#222" strokeWidth="1.400"><rect x="1" y="1" width="16.500" height="11" rx="2.500" /><path d="M3 3h3v7H3zM18.500 4.500h2v4h-2z" fill="#222" stroke="none" /></svg>
      <div className="ml-[20px] flex w-[75px] flex-col items-end"><Fit w={36}>05:46</Fit><Fit w={75}>18/04/2023</Fit></div>
      <svg className="ml-[10px] shrink-0" width="19" height="20" viewBox="0 0 19 20"><path d="M3 15V8C3 3 7 1 10 2h6v13l1.500 2H1zM6 18h5q-2.500 3-5 0z" fill="#1c1c1c" /><path d="M6 7h4l-4 5h4" stroke="#ddd" fill="none" strokeWidth="1.300" /><path d="M11.500 1.500h5l-5 6h5" stroke="#dad8e6" strokeWidth="3" fill="none" /><path d="M11.500 1.500h5l-5 6h5" stroke="#1c1c1c" strokeWidth="1.400" fill="none" /></svg>
    </div>
  );
}

function RecorderBadge() {
  return (
    <div className="absolute left-[1841px] top-[993px] flex size-[50px] items-center justify-center rounded-full rounded-bl-[6px] bg-[#20223d] shadow-[0_1px_3px_rgba(0,0,0,.4)]">
      <div className="flex size-[40px] items-center justify-center rounded-full bg-white">
        <div className="flex size-[36px] items-center justify-center rounded-full bg-gradient-to-b from-[#5b8bf0] to-[#c4558f]">
          <div className="flex size-[30px] items-center justify-center rounded-full bg-[#f1f3fc] font-['Inter',sans-serif] text-[15.500px] font-bold leading-none text-[#20223d]">40</div>
        </div>
      </div>
      <div className="absolute bottom-[3px] left-[3px] grid grid-cols-2 gap-[1.500px]">
        {[0, 1, 2, 3, 4, 5].map((i) => <i key={i} className="size-[1.500px] bg-white" />)}
      </div>
    </div>
  );
}

export default function App() {
  return (
    <div className="relative flex h-[1080px] w-[1920px] flex-col overflow-hidden bg-[linear-gradient(90deg,#2d2d33,#2c2d31_40%,#2c2c2d)] font-['Open_Sans','Noto_Sans',sans-serif]">
      <TitleBar />
      <Tabs />
      <Ribbon />
      <Workspace />
      <StatusBar />
      <Taskbar />
      <RecorderBadge />
    </div>
  );
}
